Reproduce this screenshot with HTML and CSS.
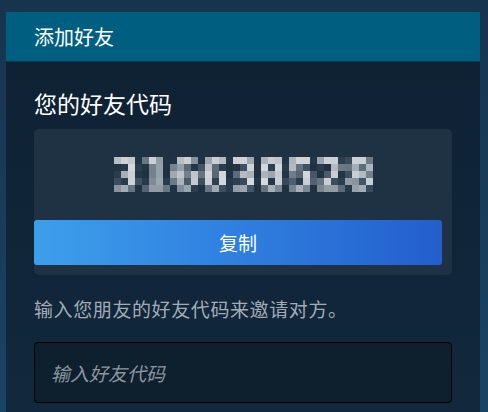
FILE: index.html
```html
<!DOCTYPE html>
<html lang="zh-CN">
<head>
    <meta charset="UTF-8">
    <title>添加好友</title>
    <link rel="stylesheet" href="styles.css">
</head>
<body>
    <svg class="defs" width="0" height="0">
        <filter id="mosaic" x="0" y="0">
            <feGaussianBlur in="SourceGraphic" stdDeviation="1.8" result="soft"/>
            <feFlood x="3" y="3" height="1" width="1"/>
            <feComposite width="7" height="7"/>
            <feTile result="grid"/>
            <feComposite in="soft" in2="grid" operator="in"/>
            <feMorphology operator="dilate" radius="3"/>
        </filter>
    </svg>

    <div class="panel">
        <div class="panel-header">添加好友</div>
        <div class="panel-body">
            <h2 class="section-title">您的好友代码</h2>
            <div class="code-box">
                <div class="code">316638528</div>
                <button class="copy-btn">复制</button>
            </div>
            <p class="hint">输入您朋友的好友代码来邀请对方。</p>
            <input class="code-input" type="text" placeholder="输入好友代码">
        </div>
    </div>
</body>
</html>
```
FILE: styles.css
```css
body {
    margin: 0;
    height: 412px;
    overflow: hidden;
    background: linear-gradient(180deg, #17344f 0%, #1a4463 100%);
    font-family: "Noto Sans CJK SC", "Noto Sans", sans-serif;
    color: #ffffff;
}
.defs {
    position: absolute;
}
.panel {
    margin: 12px 8px 0 6px;
    height: 400px;
    background: linear-gradient(180deg, #0e2133 0%, #12283c 100%);
}
.panel-header {
    height: 50px;
    box-sizing: border-box;
    padding: 0 0 0 28px;
    background-color: #005f81;
    border-bottom: 1px solid #0b3a52;
    font-size: 20px;
    line-height: 49px;
}
.panel-body {
    padding: 0 28px;
}
.section-title {
    margin: 26px 0 0;
    font-size: 23px;
    font-weight: normal;
    line-height: 30px;
}
.code-box {
    margin-top: 11px;
    height: 146px;
    box-sizing: border-box;
    padding: 0 10px 10px 0;
    background-color: #1e3244;
    border-radius: 5px;
    display: flex;
    flex-direction: column;
}
.code {
    height: 91px;
    margin-left: 10px;
    text-align: center;
    font-family: "DejaVu Sans", sans-serif;
    font-weight: bold;
    font-size: 42px;
    line-height: 91px;
    color: #d5dade;
    filter: url(#mosaic);
}
.copy-btn {
    height: 45px;
    border: none;
    border-radius: 3px;
    background: linear-gradient(90deg, #3d9feb 0%, #2f7fdf 50%, #235ecd 100%);
    color: #ffffff;
    font-family: inherit;
    font-size: 19px;
    cursor: pointer;
}
.hint {
    margin: 21px 0 0;
    font-size: 19px;
    letter-spacing: 0.6px;
    line-height: 26px;
    color: #a3acb6;
}
.code-input {
    display: block;
    margin-top: 20px;
    width: 100%;
    height: 61px;
    box-sizing: border-box;
    padding: 0 16px;
    background-color: #0e1f2d;
    border: 1px solid #000000;
    border-radius: 4px;
    font-family: inherit;
    font-size: 19px;
    color: #ffffff;
}
.code-input::placeholder {
    color: #8c959f;
    font-style: italic;
}
```
